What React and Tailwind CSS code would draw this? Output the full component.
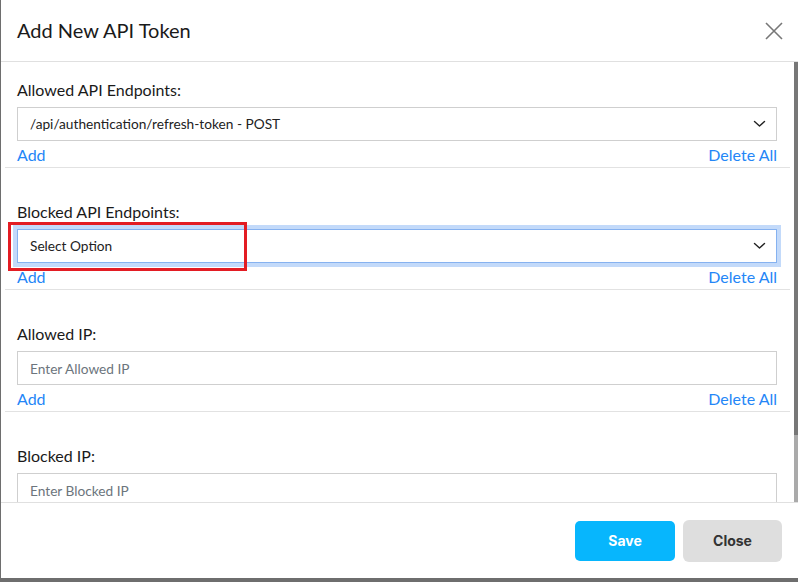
import { useState } from 'react'

const SECTIONS = [
  { label: 'Allowed API Endpoints:', type: 'select', value: '/api/authentication/refresh-token - POST' },
  { label: 'Blocked API Endpoints:', type: 'select', value: 'Select Option', focused: true, marked: true },
  { label: 'Allowed IP:', type: 'input', placeholder: 'Enter Allowed IP' },
  { label: 'Blocked IP:', type: 'input', placeholder: 'Enter Blocked IP' },
]

function Chevron() {
  return (
    <svg width="13" height="8" viewBox="0 0 13 8" fill="none" className="shrink-0">
      <path d="M1.5 1.5 L6.5 6 L11.5 1.5" stroke="#222" strokeWidth="1.4" strokeLinecap="round" strokeLinejoin="round" />
    </svg>
  )
}

function Field({ section }) {
  if (section.type === 'select') {
    return (
      <div
        className={
          'h-[34px] flex items-center justify-between pl-[12px] pr-[10px] bg-white text-[13.7px] text-[#222] border ' +
          (section.focused ? 'border-[#86b2f0] ring-4 ring-[#c3dafa]' : 'border-[#cfcfcf]')
        }
      >
        <span>{section.value}</span>
        <Chevron />
      </div>
    )
  }
  return (
    <input
      placeholder={section.placeholder}
      className="w-full h-[34px] px-[12px] border border-[#cfcfcf] bg-white text-[13.7px] text-[#222] placeholder:text-[#6c757d] outline-none"
    />
  )
}

function Section({ section }) {
  return (
    <div className="relative pt-[17px] pl-3 pr-[13px] border-b border-[#e2e2e2] mb-4">
      <label className="block text-[16px] leading-[22px] text-[#1a1a1a] mb-[6px]">{section.label}</label>
      <Field section={section} />
      <div className="flex justify-between mt-[3px] mb-px text-[16px] leading-[22px] text-[#2486f7]">
        <button>Add</button>
        <button>Delete All</button>
      </div>
      {section.marked && (
        <div className="absolute left-[3px] top-[38px] w-[239px] h-[49px] border-[3px] border-[#e31c23] pointer-events-none" />
      )}
    </div>
  )
}

export default function App() {
  const [open] = useState(true)
  if (!open) return null

  return (
    <div className="w-[798px] h-[582px] bg-[#6e6e6e] overflow-hidden" style={{ fontFamily: 'Lato, "Noto Sans", sans-serif' }}>
      <div className="ml-px h-[578px] bg-white flex flex-col">
        {/* Header */}
        <div className="h-[62px] shrink-0 flex items-center justify-between pl-4 pr-[14px] border-b border-[#e0e0e0]">
          <h2 className="text-[20px] text-[#1a1a1a] -mt-[1px]">Add New API Token</h2>
          <button className="w-[20px] h-[20px] flex items-center justify-center">
            <svg width="18" height="18" viewBox="0 0 18 18" fill="none">
              <path d="M1 1 L17 17 M17 1 L1 17" stroke="#777" strokeWidth="1.6" />
            </svg>
          </button>
        </div>

        {/* Body */}
        <div className="h-[440px] shrink-0 flex">
          <div className="flex-1 overflow-hidden pl-[4px] pr-[4px]">
            {SECTIONS.map((s, i) => (
              <Section key={i} section={s} />
            ))}
          </div>
          {/* scrollbar */}
          <div className="w-[4px] flex flex-col bg-[#aaaaaa]">
            <div className="h-[373px] bg-[#777777]" />
          </div>
        </div>

        {/* Footer */}
        <div className="flex-1 flex items-center justify-end gap-2 pr-4 border-t border-[#e0e0e0]" style={{ fontFamily: 'Inter, sans-serif' }}>
          <button className="w-[100px] h-[40px] rounded-[5px] bg-[#07b6fd] text-white text-[14px] font-bold">Save</button>
          <button className="w-[99px] h-[42px] rounded-[6px] bg-[#dedede] text-[#333] text-[14px] font-bold">Close</button>
        </div>
      </div>
    </div>
  )
}
